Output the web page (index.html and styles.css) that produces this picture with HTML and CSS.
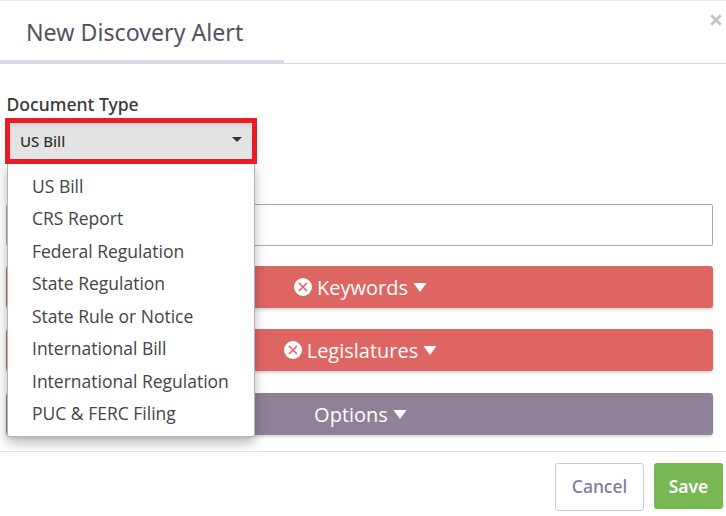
FILE: index.html
```html
<!DOCTYPE html>
<html lang="en">
<head>
   <meta charset="utf-8"/>
   <meta name="viewport" content="width=device-width, initial-scale=1" />
   <title>New Discovery Alert</title>
   <link rel="stylesheet" href="styles.css">
</head>

<body>
<div class="modal">
   <header class="modal-header">
      <h1 class="tab">New Discovery Alert</h1>
      <button class="close" aria-label="Close">
         <svg width="12" height="12" viewBox="0 0 12 12"><path d="M1.3 1.3L10.7 10.7M10.7 1.3L1.3 10.7"/></svg>
      </button>
   </header>

   <main class="modal-body">
      <div class="label">Document Type</div>
      <div class="dropdown">
         <button class="select">
            <span>US Bill</span>
            <svg class="caret" width="10" height="5" viewBox="0 0 10 5"><path d="M0 0H10L5 5Z"/></svg>
         </button>
         <!-- open menu, lies over the form -->
         <ul class="menu">
            <li>US Bill</li>
            <li>CRS Report</li>
            <li>Federal Regulation</li>
            <li>State Regulation</li>
            <li>State Rule or Notice</li>
            <li>International Bill</li>
            <li>International Regulation</li>
            <li>PUC &amp; FERC Filing</li>
         </ul>
      </div>
      <input class="name" type="text" aria-label="Name">

      <div class="bar red">
         <svg class="cross" width="18" height="18" viewBox="0 0 18 18"><circle cx="9" cy="9" r="9"/><path d="M5 5L13 13M13 5L5 13"/></svg>
         <span>Keywords</span>
         <svg class="arrow" width="14" height="9" viewBox="0 0 14 9"><path d="M0.5 0H13.5L7.6 8.3Q7 9 6.4 8.3Z"/></svg>
      </div>
      <div class="bar red">
         <svg class="cross" width="18" height="18" viewBox="0 0 18 18"><circle cx="9" cy="9" r="9"/><path d="M5 5L13 13M13 5L5 13"/></svg>
         <span>Legislatures</span>
         <svg class="arrow" width="14" height="9" viewBox="0 0 14 9"><path d="M0.5 0H13.5L7.6 8.3Q7 9 6.4 8.3Z"/></svg>
      </div>
      <div class="bar purple">
         <span>Options</span>
         <svg class="arrow" width="14" height="9" viewBox="0 0 14 9"><path d="M0.5 0H13.5L7.6 8.3Q7 9 6.4 8.3Z"/></svg>
      </div>
   </main>

   <footer class="modal-footer">
      <button class="cancel">Cancel</button>
      <button class="save">Save</button>
   </footer>
</div>
</body>
</html>
```
FILE: styles.css
```css
* {
   box-sizing: border-box;
}

body {
   margin: 0;
   background: #fff;
   color: #444;
   font-family: "Open Sans", "Noto Sans", sans-serif;
   overflow: hidden;
}

button {
   font-family: inherit;
   padding: 0;
}

.modal {
   height: 516px;
   border-top: 1px solid #ededed;
}

/* header with the active tab */
.modal-header {
   display: flex;
   justify-content: space-between;
   align-items: flex-start;
   height: 63px;
   border-bottom: 1px solid #d6d5da;
}

.tab {
   width: 284px;
   height: 63px;
   margin: 0;
   padding-left: 26px;
   border-bottom: 4px solid #dad8e5;
   color: #58505f;
   font-family: "Noto Sans", sans-serif;
   font-size: 23.2px;
   font-weight: 400;
   line-height: 62px;
   white-space: nowrap;
}

.close {
   display: flex;
   margin: 13px 4px 0 0;
   border: 0;
   background: none;
}

.close path {
   stroke: #c4c4c4;
   stroke-width: 3;
}

/* form */
.modal-body {
   height: 387px;
   padding: 29px 13px 0 6px;
}

.label {
   height: 25px;
   padding-left: 0.5px;
   color: #383838;
   font-family: "Noto Sans", sans-serif;
   font-size: 17.6px;
   font-weight: 500;
   line-height: 22px;
}

.dropdown {
   position: relative;
   width: 252px;
   margin-left: -1px;
}

.select {
   display: flex;
   justify-content: space-between;
   align-items: center;
   width: 252px;
   height: 46px;
   padding: 0 10px;
   border: 5px solid #ea1c24;
   background: #e4e4e4;
   box-shadow: inset 0 3px 4px -1px #cfcfcf;
   color: #333;
   position: relative;
   z-index: 2;
   font-family: "Noto Sans", sans-serif;
   font-size: 15px;
   font-weight: 500;
}

.caret {
   margin-bottom: 4px;
   fill: #333;
}

.menu {
   position: absolute;
   z-index: 1;
   top: 44px;
   left: 2px;
   width: 248px;
   height: 275px;
   margin: 0;
   padding: 7px 0 0 24px;
   border: 1px solid #b5b5b5;
   border-radius: 0 0 3px 3px;
   background: #fff;
   box-shadow: 0 6px 12px rgba(0, 0, 0, .28);
   list-style: none;
   font-size: 17.5px;
   line-height: 32.43px;
   white-space: nowrap;
}

.name {
   display: block;
   width: 100%;
   height: 42px;
   margin: 40px 0 20px;
   border: 1px solid #aaa8b8;
   border-radius: 2px;
   background: #fff;
}

.bar {
   display: flex;
   justify-content: center;
   align-items: center;
   gap: 5px;
   height: 42px;
   margin-bottom: 21px;
   padding-left: 2px;
   border-radius: 3px;
   box-shadow: 0 2px 3px rgba(0, 0, 0, .16);
   color: #fff;
   font-size: 20px;
}

.red {
   background: #dd6663;
}

.purple {
   margin-top: 22px;
   background: #8f8197;
}

.arrow,
.cross circle {
   fill: #fff;
}

.cross path {
   stroke: #dd6663;
   stroke-width: 1.6;
}

/* buttons */
.modal-footer {
   display: flex;
   align-items: flex-start;
   justify-content: flex-end;
   gap: 10px;
   height: 65px;
   padding: 11px 3px 0 0;
   border-top: 1px solid #e2e2e5;
}

.cancel,
.save {
   height: 48px;
   border-radius: 3px;
   font-size: 17.5px;
}

.cancel {
   width: 89px;
   padding-bottom: 2px;
   border: 1px solid #cfcbdc;
   background: #fff;
   color: #85789a;
   font-family: "Noto Sans", sans-serif;
   font-weight: 500;
}

.save {
   width: 69px;
   height: 46px;
   border: 0;
   background: #77b852;
   color: #fff;
   font-family: "Noto Sans", sans-serif;
   font-weight: 600;
}
```
